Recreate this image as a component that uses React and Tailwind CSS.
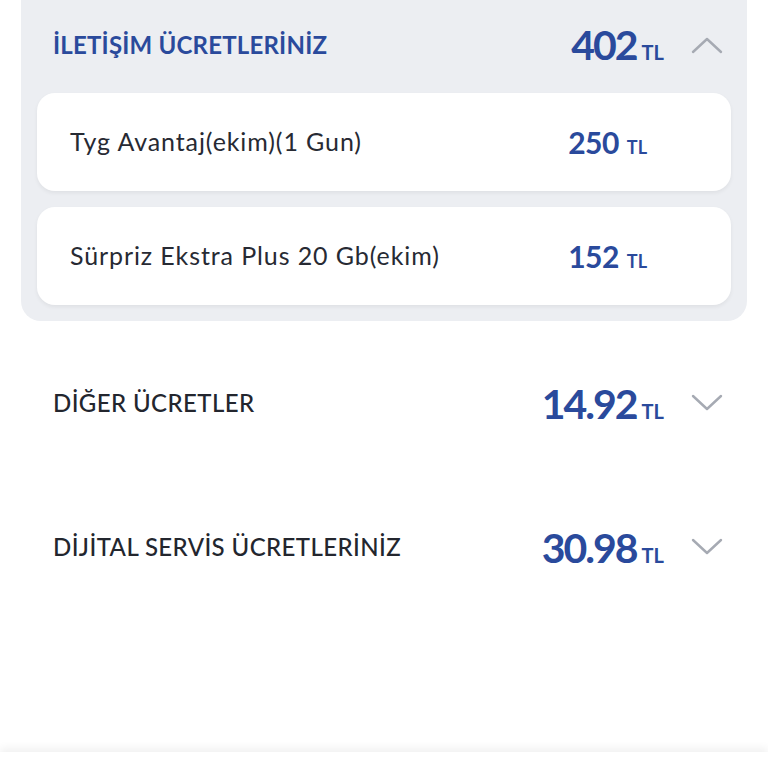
import React from "react"

const font = { fontFamily: "Lato, 'Noto Sans', sans-serif" }

function Chevron({ up }) {
    return (
        <svg width="32" height="18" viewBox="0 0 32 18" fill="none" className="shrink-0">
            <polyline
                points={up ? "2,16 16,3 30,16" : "2,2 16,15 30,2"}
                stroke="#a6aab3"
                strokeWidth="2.4"
                strokeLinecap="round"
                strokeLinejoin="round"
            />
        </svg>
    )
}

function Amount({ value, big }) {
    if (big) {
        return (
            <div className="flex items-baseline text-[#2a4a9c]">
                <span className="text-[41px] font-bold leading-none tracking-[-2px]">{value}</span>
                <span className="ml-[5px] text-[20px] font-bold leading-none">TL</span>
            </div>
        )
    }
    return (
        <div className="flex items-baseline text-[#2a4a9c]">
            <span className="text-[30px] font-bold leading-none tracking-[-0.5px]">{value}</span>
            <span className="ml-[8px] text-[18px] font-bold leading-none">TL</span>
        </div>
    )
}

function Item({ name, price }) {
    return (
        <div className="flex h-[98px] items-center justify-between rounded-[18px] bg-white pl-[33px] pr-[84px] shadow-[0_2px_4px_rgba(0,0,0,0.06)]">
            <span className="text-[25px] tracking-[0.9px] text-[#272a33]">{name}</span>
            <Amount value={price} />
        </div>
    )
}

function Row({ title, amount }) {
    return (
        <div className="flex h-[144px] items-center justify-between pl-[53px] pr-[45px]">
            <span className="text-[24px] font-medium uppercase tracking-[0.4px] text-[#23262e]">{title}</span>
            <div className="flex items-center gap-[27px]">
                <Amount value={amount} big />
                <Chevron />
            </div>
        </div>
    )
}

export default function App() {
    return (
        <div className="relative h-[768px] w-[768px] overflow-hidden bg-white" style={font}>
            <div className="mx-[21px] rounded-b-[20px] bg-[#eceef2] px-[16px] pb-[16px]">
                <div className="flex h-[93px] items-center justify-between pb-[4px] pl-[16px] pr-[8px]">
                    <span className="text-[24px] font-bold tracking-[0.2px] text-[#2a4a9c]">İLETİŞİM ÜCRETLERİNİZ</span>
                    <div className="flex items-center gap-[27px]">
                        <Amount value="402" big />
                        <Chevron up />
                    </div>
                </div>
                <div className="flex flex-col gap-[16px]">
                    <Item name="Tyg Avantaj(ekim)(1 Gun)" price="250" />
                    <Item name="Sürpriz Ekstra Plus 20 Gb(ekim)" price="152" />
                </div>
            </div>

            <div className="mt-[10px]">
                <Row title="DİĞER ÜCRETLER" amount="14.92" />
                <Row title="DİJİTAL SERVİS ÜCRETLERİNİZ" amount="30.98" />
            </div>

            <div className="absolute bottom-0 left-0 right-0 h-[16px] bg-white shadow-[0_-4px_8px_rgba(0,0,0,0.06)]" />
        </div>
    )
}
